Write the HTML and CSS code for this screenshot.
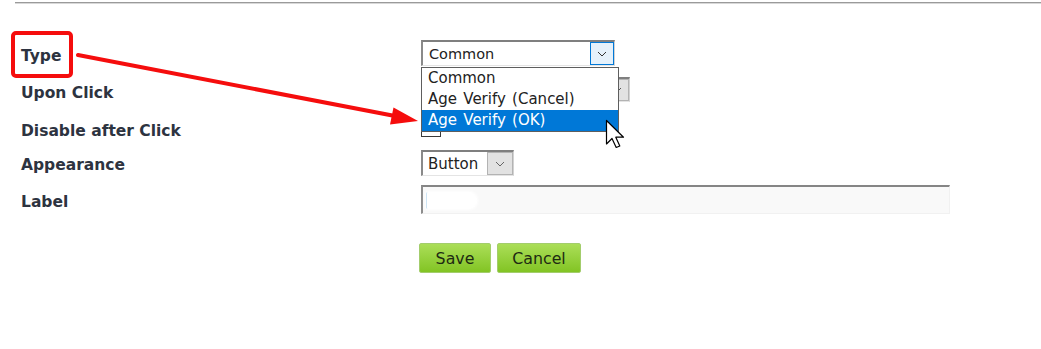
FILE: index.html
```html
<!DOCTYPE html>
<html>
<head>
<meta charset="utf-8">
<link rel="stylesheet" href="styles.css">
</head>
<body>
<div class="topline"></div>
<form class="form">
  <div class="row r-type">
    <div class="lbl">Type</div>
    <div class="ctl">
      <div class="select sel-type focused">
        <span class="val">Common</span>
        <span class="arrow"><svg width="10" height="6" viewBox="0 0 10 6"><path d="M1 1 L5 5 L9 1" fill="none" stroke="#333" stroke-width="1"/></svg></span>
        <ul class="list">
          <li>Common</li>
          <li>Age Verify (Cancel)</li>
          <li class="sel">Age Verify (OK)</li>
        </ul>
      </div>
    </div>
  </div>
  <div class="row r-upon">
    <div class="lbl">Upon Click</div>
    <div class="ctl">
      <div class="select sel-upon">
        <span class="val"></span>
        <span class="arrow"><svg width="10" height="6" viewBox="0 0 10 6"><path d="M1 1 L5 5 L9 1" fill="none" stroke="#555" stroke-width="1"/></svg></span>
      </div>
    </div>
  </div>
  <div class="row r-dis">
    <div class="lbl">Disable after Click</div>
    <div class="ctl"><span class="chk"></span></div>
  </div>
  <div class="row r-app">
    <div class="lbl">Appearance</div>
    <div class="ctl">
      <div class="select sel-app">
        <span class="val">Button</span>
        <span class="arrow"><svg width="10" height="6" viewBox="0 0 10 6"><path d="M1 1 L5 5 L9 1" fill="none" stroke="#666" stroke-width="1"/></svg></span>
      </div>
    </div>
  </div>
  <div class="row r-label">
    <div class="lbl">Label</div>
    <div class="ctl"><div class="input"><span class="blob"></span></div></div>
  </div>
  <div class="row r-btns">
    <div></div>
    <div class="ctl btns">
      <button type="button" class="gbtn save">Save</button>
      <button type="button" class="gbtn cancel">Cancel</button>
    </div>
  </div>
</form>
<svg class="annot" width="1041" height="349" viewBox="0 0 1041 349">
  <rect x="13" y="33" width="58" height="43" rx="3" fill="none" stroke="#f50d0d" stroke-width="4"/>
  <line x1="78" y1="55" x2="395" y2="116" stroke="#f50d0d" stroke-width="4" stroke-linecap="round"/>
  <polygon points="418,121 390,124.5 393.5,107.5" fill="#f50d0d"/>
</svg>
<svg class="cursor" width="22" height="32" viewBox="0 0 22 32">
  <path d="M1.5 1.5 L1.5 25 L7 19.5 L11.2 28.5 L14.8 27 L10.8 18.2 L18.5 18.2 Z" fill="#fff" stroke="#000" stroke-width="1.2" stroke-linejoin="round"/>
</svg>
</body>
</html>
```
FILE: styles.css
```css
html, body {
  margin: 0;
  padding: 0;
}
body {
  position: relative;
  width: 1041px;
  height: 349px;
  overflow: hidden;
  background: #fff;
  font-family: "DejaVu Sans", Verdana, sans-serif;
}
.topline {
  margin: 2px 0 0 15px;
  height: 1px;
  background: #9a9a9a;
  border-bottom: 1px solid #d8d8d8;
}
.form {
  padding: 36px 0 0 21px;
  margin: 0;
}
.row {
  display: grid;
  grid-template-columns: 400px auto;
  grid-template-rows: 100%;
  align-items: center;
}
.lbl {
  font-weight: bold;
  font-size: 15.5px;
  line-height: 18px;
  color: #2d3340;
  padding-top: 4px;
  white-space: nowrap;
}
.r-type .lbl { padding-top: 5px; }
.r-upon .lbl { padding-top: 7px; }
.r-dis .lbl { padding-top: 1px; }
.ctl {
  display: flex;
  align-items: center;
}
.r-type { height: 26px; }
.r-upon { height: 25px; margin-top: 11px; }
.r-dis { height: 14px; margin-top: 21px; }
.r-app { height: 26px; margin-top: 13px; }
.r-label { height: 29px; margin-top: 9px; }
.r-btns { height: 30px; margin-top: 29px; }

.select {
  position: relative;
  box-sizing: border-box;
  height: 26px;
  display: flex;
  align-items: center;
  background: #fff;
  border-top: 2px solid #7f7f7f;
  border-left: 2px solid #8a8a8a;
  border-right: 1px solid #d2d2d2;
  border-bottom: 1px solid #e4e4e4;
  font-size: 14.5px;
  color: #222;
}
.val {
  flex: 1;
  padding-left: 6px;
  white-space: nowrap;
  overflow: hidden;
}
.arrow {
  box-sizing: border-box;
  width: 24px;
  height: 23px;
  display: flex;
  align-items: center;
  justify-content: center;
  background: #e2e2e2;
  border: 1px solid #b3b3b3;
}
.focused .arrow {
  background: #e5f1fb;
  border-color: #0078d7;
}
.sel-type { width: 194px; z-index: 3; }
.sel-upon { width: 209px; height: 25px; }
.sel-upon .arrow { height: 22px; }
.sel-app { width: 93px; font-size: 15px; }
.sel-app .val { padding-left: 5px; }
.sel-app .arrow { width: 26px; }

.list {
  position: absolute;
  top: 25px;
  left: -2px;
  width: 196px;
  margin: 0;
  padding: 0;
  list-style: none;
  background: #fff;
  border: 1px solid #5e5e5e;
  font-size: 15px;
  word-spacing: 1.5px;
  color: #222;
}
.list li {
  height: 21px;
  line-height: 21px;
  padding-left: 6px;
  white-space: nowrap;
}
.list li.sel {
  background: #0078d7;
  color: #fff;
}

.chk {
  box-sizing: border-box;
  width: 20px;
  height: 14px;
  border: 1px solid #3a3a3a;
  background: #fff;
}

.input {
  box-sizing: border-box;
  width: 529px;
  height: 29px;
  display: flex;
  align-items: center;
  padding-left: 3px;
  background: #f9f9f9;
  border-top: 2px solid #858585;
  border-left: 2px solid #8d8d8d;
  border-right: 1px solid #f1f1f1;
  border-bottom: 1px solid #f1f1f1;
}
.blob {
  width: 50px;
  height: 17px;
  background: #fff;
  border-left: 1px solid #cde4f4;
  border-radius: 2px 10px 10px 2px;
  box-shadow: 0 0 3px 1px #fff;
}

.btns {
  gap: 6px;
  margin-left: -2px;
}
.gbtn {
  box-sizing: border-box;
  height: 30px;
  padding: 0;
  border: 1px solid #a3cd6c;
  border-radius: 2px;
  background: linear-gradient(#abde58, #82c424);
  font-family: "DejaVu Sans", Verdana, sans-serif;
  font-size: 15.8px;
  color: #1e2a12;
}
.save { width: 72px; }
.cancel { width: 84px; }

.annot {
  position: absolute;
  top: 0;
  left: 0;
  z-index: 5;
  pointer-events: none;
}
.cursor {
  position: absolute;
  left: 605px;
  top: 119px;
  z-index: 10;
  pointer-events: none;
}
```
